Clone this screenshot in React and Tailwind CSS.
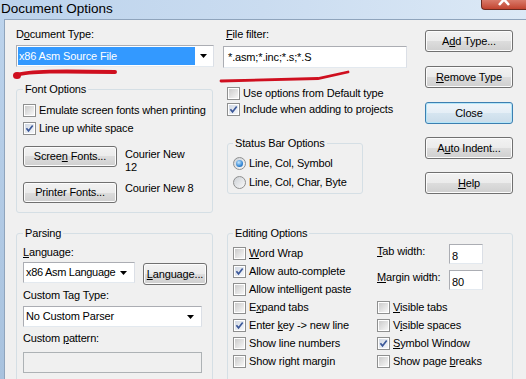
import React from "react";

function Arrow() {
  return (
    <svg width="7" height="4" viewBox="0 0 7 4" className="shrink-0">
      <path d="M0 0h7L3.5 4z" fill="#000" />
    </svg>
  );
}

function Check({ on }) {
  return (
    <span className="flex w-[13px] h-[13px] shrink-0 border border-[#8e8f8f] bg-white p-px">
      <span
        className={
          on
            ? "relative flex-1 bg-linear-to-br from-[#d2d9e4] to-[#f5f7fa]"
            : "relative flex-1 bg-linear-to-br from-[#cbcbcb] to-[#f7f7f7]"
        }
      >
        {on && (
          <svg width="9" height="9" viewBox="0 0 9 9" className="absolute left-0 top-0">
            <path d="M1.4 4.3L3.5 6.9L7.7 1.5" fill="none" stroke="#3b5899" strokeWidth="1.7" />
          </svg>
        )}
      </span>
    </span>
  );
}

function CheckRow({ on, className = "", children }) {
  return (
    <div className={`flex items-center gap-[3px] h-[13px] ${className}`}>
      <Check on={on} />
      <span className="whitespace-nowrap">{children}</span>
    </div>
  );
}

function RadioRow({ on, className = "", children }) {
  return (
    <div className={`flex items-center gap-[3px] h-[13px] ${className}`}>
      <span className="flex items-center justify-center w-[13px] h-[13px] shrink-0 rounded-full border border-[#8e8f8f] bg-linear-to-br from-[#cdd1d6] to-[#f9f9f9]">
        {on && (
          <span className="w-[7px] h-[7px] rounded-full bg-[radial-gradient(circle_at_40%_35%,#c6e8ff,#2a7fd0_65%,#1a5596)]" />
        )}
      </span>
      <span className="whitespace-nowrap">{children}</span>
    </div>
  );
}

function Btn({ def, className = "", children }) {
  return (
    <div
      className={
        def
          ? `flex items-center justify-center shrink-0 rounded-[3px] border border-[#3c7fb1] bg-[linear-gradient(#eef5fa_0%,#e5eef6_50%,#d6e5f0_50%,#cadcea_100%)] shadow-[inset_0_0_0_1px_#b5e6f8] ${className}`
          : `flex items-center justify-center shrink-0 rounded-[3px] border border-[#707070] bg-[linear-gradient(#f2f2f2_0%,#ebebeb_50%,#dddddd_50%,#cfcfcf_100%)] shadow-[inset_0_0_0_1px_#fcfcfc] ${className}`
      }
    >
      <span className="whitespace-nowrap">{children}</span>
    </div>
  );
}

function Combo({ className = "", children, arrowPad = "pr-[6px]" }) {
  return (
    <div className={`flex items-center bg-white border border-[#abadb3] border-b-[#e3e9ef] border-r-[#dbdfe6] ${className}`}>
      <span className="flex-1 pl-[2px] whitespace-nowrap">{children}</span>
      <span className={arrowPad}>
        <Arrow />
      </span>
    </div>
  );
}

const box = "border border-[#d5dfe5] rounded-[3px] min-w-0";

export default function App() {
  return (
    <div className="relative w-[526px] h-[379px] overflow-hidden flex flex-col bg-[#f0f0f0] text-black text-[11px] leading-[13px] tracking-[-0.15px] font-['Liberation_Sans',Arial,sans-serif]">
      {/* title bar */}
      <div className="flex h-[19px] shrink-0 bg-linear-to-r from-[#bcd3ec] via-[#cadcf0] to-[#dce9f6]">
        <div className="pl-px pt-px text-[13.5px] leading-[15px] tracking-normal">Document Options</div>
        <div className="ml-auto w-[45px] h-[10px] rounded-bl-[4px] border border-t-0 border-r-0 border-[#6b2a20] bg-linear-to-b from-[#d97a6a] to-[#c2432f] overflow-hidden">
          <svg width="45" height="10" viewBox="0 0 45 10">
            <path d="M17 -6L27 5M27 -6L17 5" stroke="#fff" strokeWidth="2.6" />
          </svg>
        </div>
      </div>

      <div className="flex flex-1 min-h-0">
        <div className="w-[4px] bg-linear-to-b from-[#bcd3ec] to-[#a8c2de]" />
        <div className="flex-1 flex flex-col border-l border-t border-[#8fa4bc] pl-[11px]">
          {/* upper part */}
          <div className="flex items-start">
            {/* left column */}
            <div className="w-[198px] flex flex-col">
              <div className="mt-[8px]">
                D<u>o</u>cument Type:
              </div>
              <div className="mt-[4px] h-[22px] flex items-stretch bg-white border border-[#abadb3] border-b-[#e3e9ef] border-r-[#dbdfe6] p-px">
                <span className="w-[177px] bg-[#3399ff] text-white pl-px flex items-center whitespace-nowrap">
                  x86 Asm Source File
                </span>
                <span className="flex-1 flex items-center justify-center">
                  <Arrow />
                </span>
              </div>
              <fieldset className={`mt-[16px] w-[197px] pl-[6px] pb-[9px] ${box}`}>
                <legend className="px-[2px]">Font Options</legend>
                <CheckRow className="mt-[8px]">Emulate screen fonts when printing</CheckRow>
                <CheckRow on className="mt-[5px]">
                  Line up white space
                </CheckRow>
                <div className="flex items-start h-[21px] mt-[11px]">
                  <Btn className="w-[94px] h-[21px]">
                    Scree<u>n</u> Fonts...
                  </Btn>
                  <div className="ml-[8px] mt-[2px] whitespace-nowrap">
                    Courier New
                    <br />
                    12
                  </div>
                </div>
                <div className="flex items-start h-[21px] mt-[15px]">
                  <Btn className="w-[94px] h-[21px]">Printer Fonts...</Btn>
                  <div className="ml-[8px]">Courier New 8</div>
                </div>
              </fieldset>
            </div>

            {/* middle column */}
            <div className="ml-[9px] w-[184px] flex flex-col">
              <div className="mt-[8px] pl-[3px]">
                <u>F</u>ile filter:
              </div>
              <div className="mt-[5px] h-[22px] flex items-center bg-white border border-[#abadb3] border-b-[#e3e9ef] border-r-[#dbdfe6] pl-[4px] whitespace-nowrap">
                *.asm;*.inc;*.s;*.S
              </div>
              <CheckRow className="mt-[19px] pl-[4px]">Use options from Default type</CheckRow>
              <CheckRow on className="mt-[3px] pl-[4px]">
                Include when adding to projects
              </CheckRow>
              <fieldset className={`mt-[21px] ml-[4px] w-[136px] pl-[5px] pb-[4px] ${box}`}>
                <legend className="px-[2px]">Status Bar Options</legend>
                <RadioRow on className="mt-[7px]">
                  Line, Col, Symbol
                </RadioRow>
                <RadioRow className="mt-[6px]">Line, Col, Char, Byte</RadioRow>
              </fieldset>
            </div>

            {/* buttons */}
            <div className="ml-[18px] w-[88px] flex flex-col">
              <Btn className="mt-[10px] h-[22px]">
                A<u>d</u>d Type...
              </Btn>
              <Btn className="mt-[14px] h-[22px]">
                <u>R</u>emove Type
              </Btn>
              <Btn def className="mt-[14px] h-[22px]">
                Close
              </Btn>
              <Btn className="mt-[13px] h-[22px]">
                A<u>u</u>to Indent...
              </Btn>
              <Btn className="mt-[13px] h-[22px]">
                <u>H</u>elp
              </Btn>
            </div>
          </div>

          {/* lower part */}
          <div className="flex items-start mt-[14px]">
            <fieldset className={`w-[197px] h-[170px] pl-[6px] ${box}`}>
              <legend className="px-[2px]">Parsing</legend>
              <div className="mt-[6px]">
                <u>L</u>anguage:
              </div>
              <div className="flex items-start mt-[3px]">
                <Combo className="w-[112px] h-[21px] tracking-[-0.3px]" arrowPad="pr-[7px]">
                  x86 Asm Language
                </Combo>
                <Btn className="ml-[8px] mt-px w-[64px] h-[22px]">
                  <u>L</u>anguage...
                </Btn>
              </div>
              <div className="mt-[4px]">Custom Tag Type:</div>
              <Combo className="mt-[4px] w-[179px] h-[21px]" arrowPad="pr-[7px]">
                No Custom Parser
              </Combo>
              <div className="mt-[5px]">
                Custom <u>p</u>attern:
              </div>
              <div className="mt-[7px] w-[179px] h-[21px] border border-[#adb2b5] bg-[#f0f0f0]" />
            </fieldset>

            <fieldset className={`ml-[14px] w-[286px] h-[170px] pl-[5px] ${box}`}>
              <legend className="px-[2px]">Editing Options</legend>
              <div className="flex items-start">
                <div className="w-[144px] flex flex-col gap-[5px] mt-[7px]">
                  <CheckRow>
                    <u>W</u>ord Wrap
                  </CheckRow>
                  <CheckRow on>Allow auto-complete</CheckRow>
                  <CheckRow>Allow intelligent paste</CheckRow>
                  <CheckRow>
                    E<u>x</u>pand tabs
                  </CheckRow>
                  <CheckRow on>
                    Enter <u>k</u>ey {"->"} new line
                  </CheckRow>
                  <CheckRow>Show line numbers</CheckRow>
                  <CheckRow>Show right margin</CheckRow>
                </div>
                <div className="flex flex-col">
                  <div className="flex items-start mt-[4px]">
                    <div className="w-[72px] mt-px">
                      <u>T</u>ab width:
                    </div>
                    <div className="w-[34px] h-[20px] bg-white border border-[#abadb3] border-b-[#e3e9ef] border-r-[#dbdfe6] pl-[2px] pt-[5px]">
                      8
                    </div>
                  </div>
                  <div className="flex items-start mt-[6px]">
                    <div className="w-[72px] mt-px">
                      <u>M</u>argin width:
                    </div>
                    <div className="w-[34px] h-[20px] bg-white border border-[#abadb3] border-b-[#e3e9ef] border-r-[#dbdfe6] pl-[2px] pt-[5px]">
                      80
                    </div>
                  </div>
                  <div className="flex flex-col gap-[5px] mt-[11px]">
                    <CheckRow>
                      <u>V</u>isible tabs
                    </CheckRow>
                    <CheckRow>
                      V<u>i</u>sible spaces
                    </CheckRow>
                    <CheckRow on>
                      <u>S</u>ymbol Window
                    </CheckRow>
                    <CheckRow>
                      Show page <u>b</u>reaks
                    </CheckRow>
                  </div>
                </div>
              </div>
            </fieldset>
          </div>
        </div>
      </div>

      {/* red hand-drawn marks */}
      <svg className="absolute left-0 top-0 pointer-events-none" width="526" height="379">
        <path d="M17 75C28 71 60 71 115 72" fill="none" stroke="#cf0f1f" strokeWidth="4" strokeLinecap="round" />
        <ellipse cx="17" cy="75.5" rx="4" ry="3.5" fill="#cf0f1f" />
        <path d="M221 81L318 78.5L348 72" fill="none" stroke="#cf0f1f" strokeWidth="2.8" strokeLinecap="round" />
      </svg>
    </div>
  );
}
